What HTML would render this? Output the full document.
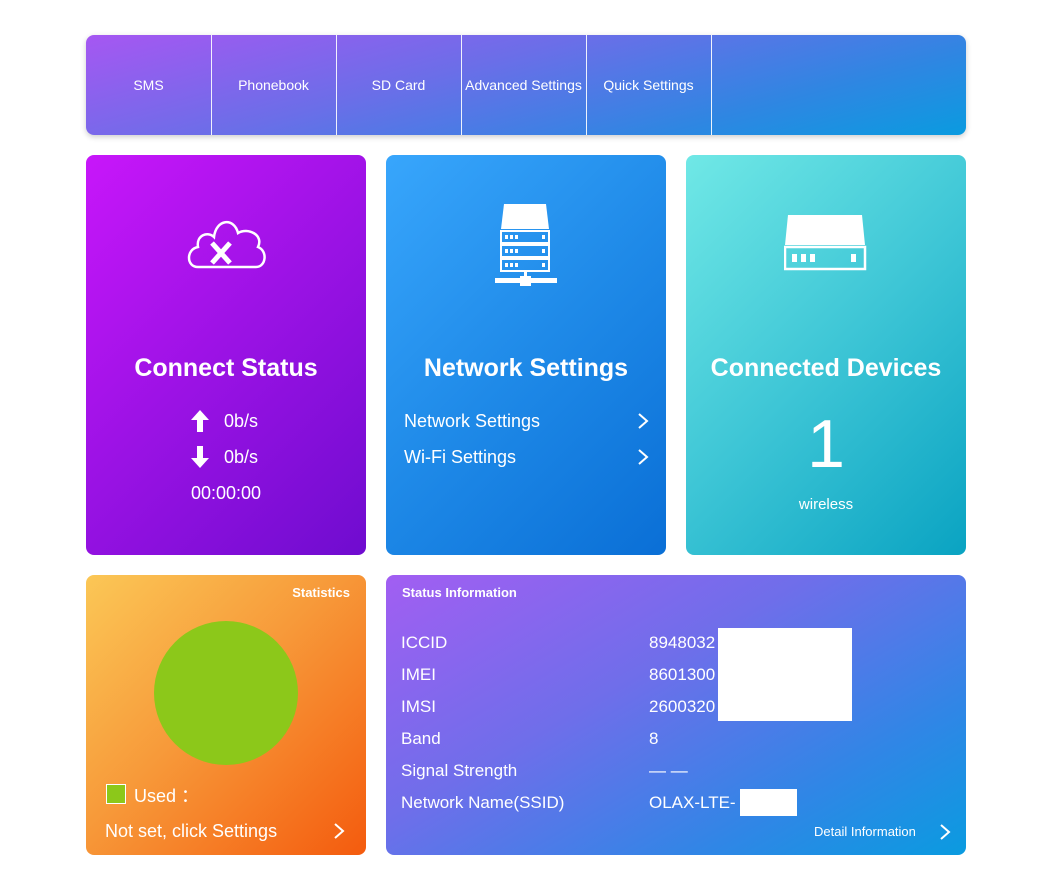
<!DOCTYPE html><html><head><style>
body{margin:0;width:1054px;height:894px;background:#fff;font-family:"Liberation Sans",sans-serif;color:#fff;position:relative;overflow:hidden}
.a{position:absolute}
.nav{left:86px;top:35px;width:880px;height:100px;border-radius:8px;background:linear-gradient(165deg,#a657f2 0%,#6b6ee8 40%,#2f86e2 75%,#0a9be0 100%);box-shadow:0 2px 6px rgba(0,0,0,.2);overflow:hidden}
.nav div{position:absolute;top:0;height:100px;width:125px;line-height:100px;text-align:center;font-size:14px;border-right:1px solid rgba(255,255,255,.9)}
.card{border-radius:8px;overflow:hidden}
.t{font-size:25px;font-weight:bold;text-align:center;width:100%}
.row{position:absolute;font-size:18px}
.ch{position:absolute}
</style></head><body>
<div class="a nav">
<div style="left:0">SMS</div><div style="left:125px">Phonebook</div><div style="left:250px">SD Card</div><div style="left:375px">Advanced Settings</div><div style="left:500px">Quick Settings</div><div style="left:625px;width:0;border-right:1px solid rgba(255,255,255,.12);left:625px"></div>
</div>

<div class="a card" style="left:86px;top:155px;width:280px;height:400px;background:linear-gradient(135deg,#c816fa,#9a12e4 50%,#6f0ccf)">
<svg class="a" style="left:98px;top:58px" width="84" height="58" viewBox="0 0 84 58"><path d="M14 54 C2 54 2 36 14 34 C12 22 24 18 30 24 C32 6 50 4 54 20 C64 14 80 22 74 34 C84 38 82 54 72 54 Z" fill="none" stroke="#fff" stroke-width="2.5"/><path d="M28 30 L46 50 M46 30 L28 50" stroke="#fff" stroke-width="5" fill="none"/></svg>
<div class="a t" style="top:199px">Connect Status</div>
<svg class="a" style="left:104px;top:254px" width="20" height="24"><path d="M10 1 L19 11 H13 V23 H7 V11 H1 Z" fill="#fff"/></svg>
<div class="row" style="left:138px;top:256px">0b/s</div>
<svg class="a" style="left:104px;top:290px" width="20" height="24"><path d="M10 23 L19 13 H13 V1 H7 V13 H1 Z" fill="#fff"/></svg>
<div class="row" style="left:138px;top:292px">0b/s</div>
<div class="row" style="left:0;width:280px;text-align:center;top:328px">00:00:00</div>
</div>

<div class="a card" style="left:386px;top:155px;width:280px;height:400px;background:linear-gradient(135deg,#38a6fc,#1f8ae8 50%,#0a6fd6)">
<svg class="a" style="left:108px;top:48px" width="64" height="84" viewBox="0 0 64 84"><path d="M10 1 H52 L55 26 H7 Z" fill="#fff"/><g fill="none" stroke="#fff" stroke-width="2"><rect x="7" y="28" width="48" height="12"/><rect x="7" y="42" width="48" height="12"/><rect x="7" y="56" width="48" height="12"/></g><g fill="#fff"><rect x="11" y="32" width="3" height="4"/><rect x="16" y="32" width="3" height="4"/><rect x="21" y="32" width="3" height="4"/><rect x="48" y="32" width="3" height="4"/><rect x="11" y="46" width="3" height="4"/><rect x="16" y="46" width="3" height="4"/><rect x="21" y="46" width="3" height="4"/><rect x="48" y="46" width="3" height="4"/><rect x="11" y="60" width="3" height="4"/><rect x="16" y="60" width="3" height="4"/><rect x="21" y="60" width="3" height="4"/><rect x="48" y="60" width="3" height="4"/><rect x="30" y="68" width="3" height="9"/><rect x="1" y="75" width="62" height="5"/><rect x="26" y="73" width="11" height="10"/></g></svg>
<div class="a t" style="top:199px">Network Settings</div>
<div class="row" style="left:18px;top:256px">Network Settings</div>
<svg class="ch" style="left:250px;top:257px" width="14" height="18"><path d="M3 2 L11 9 L3 16" fill="none" stroke="#fff" stroke-width="2"/></svg>
<div class="row" style="left:18px;top:292px">Wi-Fi Settings</div>
<svg class="ch" style="left:250px;top:293px" width="14" height="18"><path d="M3 2 L11 9 L3 16" fill="none" stroke="#fff" stroke-width="2"/></svg>
</div>

<div class="a card" style="left:686px;top:155px;width:280px;height:400px;background:linear-gradient(135deg,#70e8e6,#3ec6d6 50%,#0aa3c2)">
<svg class="a" style="left:98px;top:58px" width="84" height="60" viewBox="0 0 84 60"><path d="M4 2 H78 L81 32 H1 Z" fill="#fff"/><rect x="1" y="34" width="80" height="22" fill="none" stroke="#fff" stroke-width="2.5"/><g fill="#fff"><rect x="8" y="41" width="5" height="8"/><rect x="17" y="41" width="5" height="8"/><rect x="26" y="41" width="5" height="8"/><rect x="67" y="41" width="5" height="8"/></g></svg>
<div class="a t" style="top:199px">Connected Devices</div>
<div class="a" style="left:0;width:280px;text-align:center;top:250px;font-size:68px">1</div>
<div class="a" style="left:0;width:280px;text-align:center;top:341px;font-size:15px">wireless</div>
</div>

<div class="a card" style="left:86px;top:575px;width:280px;height:280px;background:linear-gradient(135deg,#fbc756,#f79a3a 45%,#f45b0e)">
<div class="a" style="right:16px;top:10px;font-size:13px;font-weight:bold">Statistics</div>
<div class="a" style="left:68px;top:46px;width:144px;height:144px;border-radius:50%;background:#8cc81a"></div>
<div class="a" style="left:20px;top:209px;width:18px;height:18px;background:#8cc81a;border:1px solid #fff"></div>
<div class="row" style="left:48px;top:207px">Used ：</div>
<div class="row" style="left:19px;top:246px">Not set, click Settings</div>
<svg class="ch" style="left:246px;top:247px" width="14" height="18"><path d="M3 2 L11 9 L3 16" fill="none" stroke="#fff" stroke-width="2"/></svg>
</div>

<div class="a card" style="left:386px;top:575px;width:580px;height:280px;background:linear-gradient(150deg,#a25ef2,#6f6eea 40%,#3086e6 75%,#0a9be0)">
<div class="a" style="left:16px;top:10px;font-size:13px;font-weight:bold">Status Information</div>
<div class="row" style="left:15px;top:52px;line-height:32px;font-size:17px">ICCID<br>IMEI<br>IMSI<br>Band<br>Signal Strength<br>Network Name(SSID)</div>
<div class="row" style="left:263px;top:52px;line-height:32px;font-size:17px">8948032<br>8601300<br>2600320<br>8<br>— —<br>OLAX-LTE-</div>
<div class="a" style="left:332px;top:53px;width:134px;height:93px;background:#fff"></div>
<div class="a" style="left:354px;top:214px;width:57px;height:27px;background:#fff"></div>
<div class="a" style="left:428px;top:249px;font-size:13px">Detail Information</div>
<svg class="ch" style="left:552px;top:248px" width="14" height="18"><path d="M3 2 L11 9 L3 16" fill="none" stroke="#fff" stroke-width="2"/></svg>
</div>
</body></html>
